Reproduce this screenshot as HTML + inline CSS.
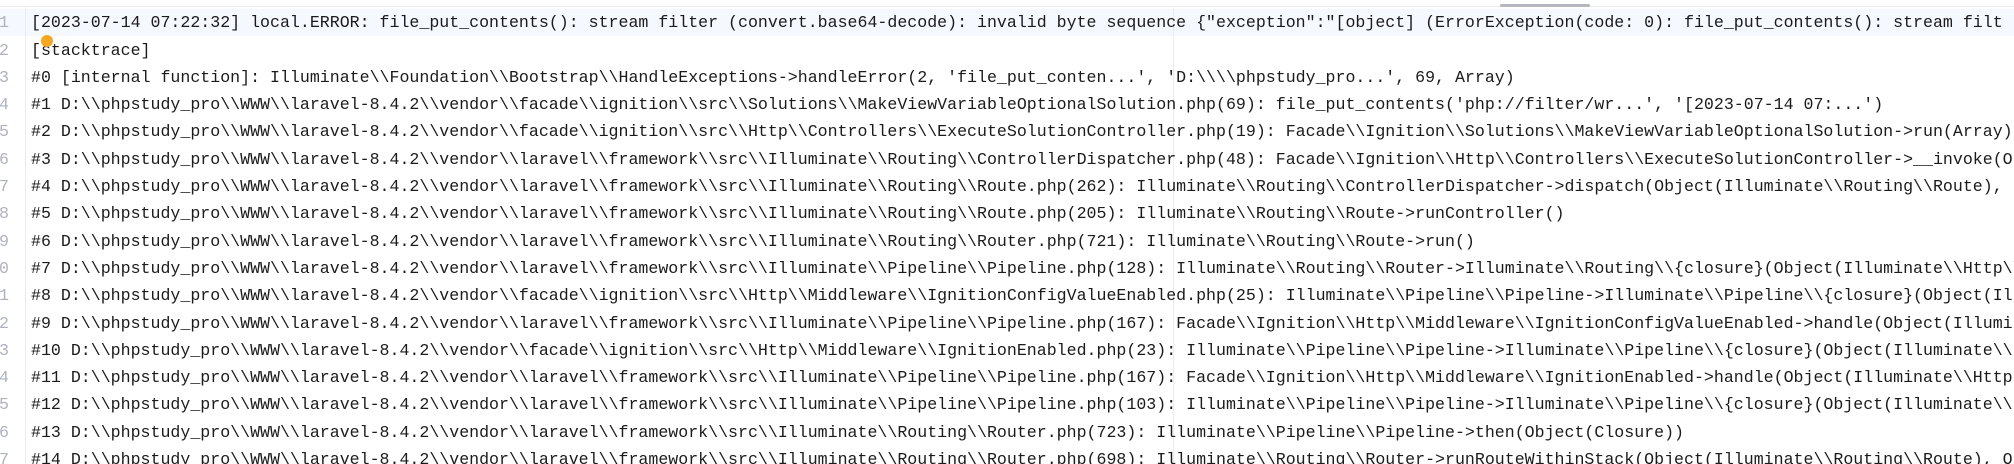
<!DOCTYPE html>
<html><head><meta charset="utf-8"><style>
html,body{margin:0;padding:0;background:#fff;width:2014px;height:464px;overflow:hidden}
.wrap{position:relative;width:2014px;height:464px;overflow:hidden}
.top{position:absolute;left:0;top:0;width:2014px;height:6px;background:#fff;border-bottom:1px solid #ebecf0}
.hl{position:absolute;left:0;top:9px;width:2014px;height:27px;background:#f5f8fe}
.sep{position:absolute;left:25px;top:7px;width:1px;height:457px;background:#ebecf0}
.guide{position:absolute;left:1173px;top:7px;width:1px;height:457px;background:#ebecf0}
.sb{position:absolute;left:1500px;top:4px;width:90px;height:3px;border-radius:2px;background:#b4b7bd}
.dot{position:absolute;left:41px;top:35px;width:12px;height:12px;border-radius:50%;background:#f5a623}
.nums{position:absolute;left:-22px;top:9.3px;width:31px;text-align:right;font:16.6px/27.3px "Liberation Mono",monospace;color:#aeb3c2;white-space:pre;overflow:hidden}
.code{position:absolute;left:31px;top:9.3px;width:1983px;overflow:hidden;font:16.6px/27.3px "Liberation Mono",monospace;color:#1b1b1b;white-space:pre}
</style></head><body><div class="wrap">
<div class="top"></div><div class="hl"></div><div class="sep"></div><div class="guide"></div><div class="sb"></div>
<div class="nums">1
2
3
4
5
6
7
8
9
10
11
12
13
14
15
16
17</div>
<div class="code">[2023-07-14 07:22:32] local.ERROR: file_put_contents(): stream filter (convert.base64-decode): invalid byte sequence {"exception":"[object] (ErrorException(code: 0): file_put_contents(): stream filt
[stacktrace]
#0 [internal function]: Illuminate\\Foundation\\Bootstrap\\HandleExceptions->handleError(2, 'file_put_conten...', 'D:\\\\phpstudy_pro...', 69, Array)
#1 D:\\phpstudy_pro\\WWW\\laravel-8.4.2\\vendor\\facade\\ignition\\src\\Solutions\\MakeViewVariableOptionalSolution.php(69): file_put_contents('php://filter/wr...', '[2023-07-14 07:...')
#2 D:\\phpstudy_pro\\WWW\\laravel-8.4.2\\vendor\\facade\\ignition\\src\\Http\\Controllers\\ExecuteSolutionController.php(19): Facade\\Ignition\\Solutions\\MakeViewVariableOptionalSolution->run(Array)
#3 D:\\phpstudy_pro\\WWW\\laravel-8.4.2\\vendor\\laravel\\framework\\src\\Illuminate\\Routing\\ControllerDispatcher.php(48): Facade\\Ignition\\Http\\Controllers\\ExecuteSolutionController->__invoke(O
#4 D:\\phpstudy_pro\\WWW\\laravel-8.4.2\\vendor\\laravel\\framework\\src\\Illuminate\\Routing\\Route.php(262): Illuminate\\Routing\\ControllerDispatcher->dispatch(Object(Illuminate\\Routing\\Route),
#5 D:\\phpstudy_pro\\WWW\\laravel-8.4.2\\vendor\\laravel\\framework\\src\\Illuminate\\Routing\\Route.php(205): Illuminate\\Routing\\Route->runController()
#6 D:\\phpstudy_pro\\WWW\\laravel-8.4.2\\vendor\\laravel\\framework\\src\\Illuminate\\Routing\\Router.php(721): Illuminate\\Routing\\Route->run()
#7 D:\\phpstudy_pro\\WWW\\laravel-8.4.2\\vendor\\laravel\\framework\\src\\Illuminate\\Pipeline\\Pipeline.php(128): Illuminate\\Routing\\Router->Illuminate\\Routing\\{closure}(Object(Illuminate\\Http\\
#8 D:\\phpstudy_pro\\WWW\\laravel-8.4.2\\vendor\\facade\\ignition\\src\\Http\\Middleware\\IgnitionConfigValueEnabled.php(25): Illuminate\\Pipeline\\Pipeline->Illuminate\\Pipeline\\{closure}(Object(Il
#9 D:\\phpstudy_pro\\WWW\\laravel-8.4.2\\vendor\\laravel\\framework\\src\\Illuminate\\Pipeline\\Pipeline.php(167): Facade\\Ignition\\Http\\Middleware\\IgnitionConfigValueEnabled->handle(Object(Illumi
#10 D:\\phpstudy_pro\\WWW\\laravel-8.4.2\\vendor\\facade\\ignition\\src\\Http\\Middleware\\IgnitionEnabled.php(23): Illuminate\\Pipeline\\Pipeline->Illuminate\\Pipeline\\{closure}(Object(Illuminate\\
#11 D:\\phpstudy_pro\\WWW\\laravel-8.4.2\\vendor\\laravel\\framework\\src\\Illuminate\\Pipeline\\Pipeline.php(167): Facade\\Ignition\\Http\\Middleware\\IgnitionEnabled->handle(Object(Illuminate\\Http
#12 D:\\phpstudy_pro\\WWW\\laravel-8.4.2\\vendor\\laravel\\framework\\src\\Illuminate\\Pipeline\\Pipeline.php(103): Illuminate\\Pipeline\\Pipeline->Illuminate\\Pipeline\\{closure}(Object(Illuminate\\
#13 D:\\phpstudy_pro\\WWW\\laravel-8.4.2\\vendor\\laravel\\framework\\src\\Illuminate\\Routing\\Router.php(723): Illuminate\\Pipeline\\Pipeline->then(Object(Closure))
#14 D:\\phpstudy_pro\\WWW\\laravel-8.4.2\\vendor\\laravel\\framework\\src\\Illuminate\\Routing\\Router.php(698): Illuminate\\Routing\\Router->runRouteWithinStack(Object(Illuminate\\Routing\\Route), O</div>
<div class="dot"></div>
</div></body></html>
